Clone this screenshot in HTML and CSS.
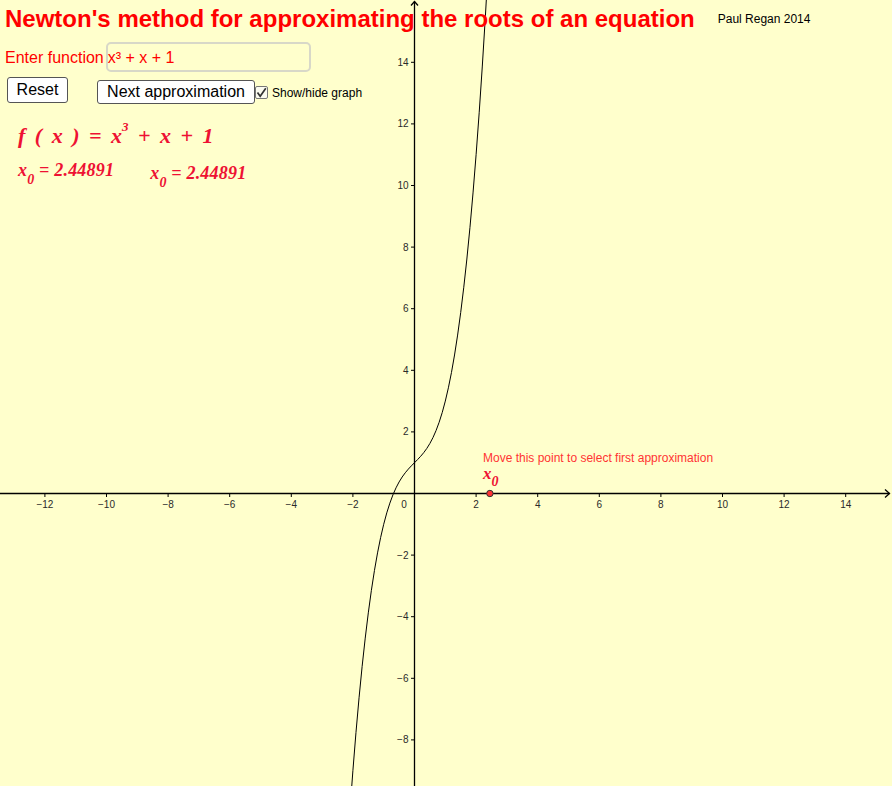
FILE: index.html
```html
<!DOCTYPE html>
<html lang="en">
<head>
<meta charset="utf-8">
<title>Newton's method</title>
<link rel="stylesheet" href="styles.css">
</head>
<body>
<div class="stage">
  <svg class="canvas" width="892" height="786" viewBox="0 0 892 786" xmlns="http://www.w3.org/2000/svg">
    <g class="axes">
      <line x1="0" y1="493.5" x2="889.5" y2="493.5"/>
      <polyline points="885,489.5 889.5,493.5 885,497.5"/>
      <line x1="414.5" y1="1.5" x2="414.5" y2="786"/>
      <polyline points="411,5.5 414.5,1.5 418,5.5"/>
    </g>
    <g class="ticks">
      <line x1="44.9" y1="493.5" x2="44.9" y2="497"/>
      <line x1="106.5" y1="493.5" x2="106.5" y2="497"/>
      <line x1="168.1" y1="493.5" x2="168.1" y2="497"/>
      <line x1="229.7" y1="493.5" x2="229.7" y2="497"/>
      <line x1="291.3" y1="493.5" x2="291.3" y2="497"/>
      <line x1="352.9" y1="493.5" x2="352.9" y2="497"/>
      <line x1="476.1" y1="493.5" x2="476.1" y2="497"/>
      <line x1="537.7" y1="493.5" x2="537.7" y2="497"/>
      <line x1="599.3" y1="493.5" x2="599.3" y2="497"/>
      <line x1="660.9" y1="493.5" x2="660.9" y2="497"/>
      <line x1="722.5" y1="493.5" x2="722.5" y2="497"/>
      <line x1="784.1" y1="493.5" x2="784.1" y2="497"/>
      <line x1="845.7" y1="493.5" x2="845.7" y2="497"/>
      <line x1="411" y1="62.3" x2="414.5" y2="62.3"/>
      <line x1="411" y1="123.9" x2="414.5" y2="123.9"/>
      <line x1="411" y1="185.5" x2="414.5" y2="185.5"/>
      <line x1="411" y1="247.1" x2="414.5" y2="247.1"/>
      <line x1="411" y1="308.7" x2="414.5" y2="308.7"/>
      <line x1="411" y1="370.3" x2="414.5" y2="370.3"/>
      <line x1="411" y1="431.9" x2="414.5" y2="431.9"/>
      <line x1="411" y1="555.1" x2="414.5" y2="555.1"/>
      <line x1="411" y1="616.7" x2="414.5" y2="616.7"/>
      <line x1="411" y1="678.3" x2="414.5" y2="678.3"/>
      <line x1="411" y1="739.9" x2="414.5" y2="739.9"/>
    </g>
    <g class="xlabels">
      <text x="44.9" y="507.5">−12</text>
      <text x="106.5" y="507.5">−10</text>
      <text x="168.1" y="507.5">−8</text>
      <text x="229.7" y="507.5">−6</text>
      <text x="291.3" y="507.5">−4</text>
      <text x="352.9" y="507.5">−2</text>
      <text x="404" y="507.5">0</text>
      <text x="476.1" y="507.5">2</text>
      <text x="537.7" y="507.5">4</text>
      <text x="599.3" y="507.5">6</text>
      <text x="660.9" y="507.5">8</text>
      <text x="722.5" y="507.5">10</text>
      <text x="784.1" y="507.5">12</text>
      <text x="845.7" y="507.5">14</text>
    </g>
    <g class="ylabels">
      <text x="408.5" y="65.8">14</text>
      <text x="408.5" y="127.4">12</text>
      <text x="408.5" y="189">10</text>
      <text x="408.5" y="250.6">8</text>
      <text x="408.5" y="312.2">6</text>
      <text x="408.5" y="373.8">4</text>
      <text x="408.5" y="435.4">2</text>
      <text x="408.5" y="558.6">−2</text>
      <text x="408.5" y="620.2">−4</text>
      <text x="408.5" y="681.8">−6</text>
      <text x="408.5" y="743.4">−8</text>
    </g>
    <g transform="translate(414.5 493.5) scale(30.8 -30.8)">
      <polyline class="curve" points="-2.1,-10.361 -2.0,-9 -1.9,-7.759 -1.8,-6.632 -1.7,-5.613 -1.6,-4.696 -1.5,-3.875 -1.4,-3.144 -1.3,-2.497 -1.2,-1.928 -1.1,-1.431 -1,-1 -0.9,-0.629 -0.8,-0.312 -0.7,-0.043 -0.6,0.184 -0.5,0.375 -0.4,0.536 -0.3,0.673 -0.2,0.792 -0.1,0.899 0,1 0.1,1.101 0.2,1.208 0.3,1.327 0.4,1.464 0.5,1.625 0.6,1.816 0.7,2.043 0.8,2.312 0.9,2.629 1,3 1.1,3.431 1.2,3.928 1.3,4.497 1.4,5.144 1.5,5.875 1.6,6.696 1.7,7.613 1.8,8.632 1.9,9.759 2,11 2.1,12.361 2.2,13.848 2.3,15.467 2.4,17.224"/>
    </g>
    <circle class="point" cx="489.9" cy="493.5" r="3.2"/>
  </svg>

  <div class="panel">
    <header class="head">
      <h1 class="title">Newton's method for approximating the roots of an equation</h1>
      <span class="credit">Paul Regan 2014</span>
    </header>
    <div class="fn-row">
      <span class="fn-label">Enter function</span>
      <div class="fn-input">x³ + x + 1</div>
    </div>
    <div class="btn-row">
      <button class="btn btn-reset">Reset</button>
      <button class="btn btn-next">Next approximation</button>
      <span class="check"><svg width="11" height="11" viewBox="0 0 11 11"><polyline points="1.5,5.5 4.2,9.2 9.8,1.2"/></svg></span>
      <span class="check-label">Show/hide graph</span>
    </div>
    <div class="formula">f ( x ) = x<sup>3</sup> + x + 1</div>
    <div class="approx-row">
      <div class="approx">x<sub>0</sub> = 2.44891</div>
      <div class="approx approx-2">x<sub>0</sub> = 2.44891</div>
    </div>
  </div>

  <div class="hint">Move this point to select first approximation</div>
  <div class="pt-label">x<sub>0</sub></div>
</div>
</body>
</html>
```
FILE: styles.css
```css
* {
  box-sizing: border-box;
}

html,
body {
  margin: 0;
  padding: 0;
}

body {
  background: #ffffcc;
  font-family: "Liberation Sans", Arial, sans-serif;
  overflow: hidden;
}

.stage {
  position: relative;
  width: 892px;
  height: 786px;
}

.canvas {
  position: absolute;
  left: 0;
  top: 0;
}

.axes line,
.axes polyline {
  stroke: #000;
  stroke-width: 1.3;
  fill: none;
}

.ticks line {
  stroke: #000;
  stroke-width: 1;
}

.xlabels text,
.ylabels text {
  font-family: "Liberation Sans", Arial, sans-serif;
  font-size: 10px;
  fill: #2a2a2a;
}

.xlabels text {
  text-anchor: middle;
}

.ylabels text {
  text-anchor: end;
}

.curve {
  fill: none;
  stroke: #000;
  stroke-width: 1;
  stroke-linejoin: round;
  vector-effect: non-scaling-stroke;
}

.point {
  fill: #ff3333;
  stroke: #333;
  stroke-width: 1;
}

.panel {
  position: relative;
  display: flex;
  flex-direction: column;
  align-items: flex-start;
  padding: 5px 0 0 5px;
}

.head {
  display: flex;
  align-items: flex-start;
  gap: 23px;
}

.title {
  margin: 0;
  font-size: 24px;
  line-height: 28px;
  font-weight: bold;
  color: #ff0000;
  white-space: nowrap;
}

.credit {
  margin-top: 7px;
  font-size: 12px;
  line-height: 14px;
  color: #000;
}

.fn-row {
  display: flex;
  align-items: center;
  height: 30px;
  margin-top: 9px;
}

.fn-label {
  font-size: 16px;
  line-height: 18px;
  padding-top: 2px;
  color: #ff0000;
}

.fn-input {
  display: flex;
  align-items: center;
  width: 205px;
  height: 30px;
  margin-left: 2px;
  padding: 2px 0 0 0;
  border: 2px solid #d8d8c8;
  border-radius: 5px;
  font-size: 16px;
  line-height: 18px;
  color: #ff0000;
}

.btn-row {
  display: flex;
  align-items: flex-start;
  margin-top: 5px;
  padding-left: 2px;
}

.btn {
  margin: 0;
  padding: 0;
  font-family: "Liberation Sans", Arial, sans-serif;
  font-size: 16px;
  color: #000;
  background: #fff;
  border: 1px solid #555;
  border-radius: 3px;
}

.btn-reset {
  width: 61px;
  height: 26px;
}

.btn-next {
  width: 158px;
  height: 24px;
  margin-left: 29px;
  margin-top: 3px;
}

.check {
  display: flex;
  align-items: center;
  justify-content: center;
  width: 13px;
  height: 13px;
  margin-top: 9px;
  border: 1px solid #777;
  border-radius: 2px;
  background: #fbfbf0;
}

.check polyline {
  fill: none;
  stroke: #333;
  stroke-width: 1.7;
}

.check-label {
  margin-top: 8.5px;
  margin-left: 4px;
  font-size: 12px;
  line-height: 14px;
  color: #000;
}

.formula {
  margin-top: 19px;
  margin-left: 13px;
  font-family: "Liberation Serif", "Times New Roman", serif;
  font-style: italic;
  font-weight: bold;
  font-size: 22px;
  line-height: 25px;
  word-spacing: 4px;
  white-space: pre;
  color: #ee1133;
}

.formula sup {
  font-size: 13px;
  line-height: 0;
  vertical-align: 12px;
}

.approx-row {
  display: flex;
  align-items: flex-start;
  gap: 36px;
  margin-top: 12px;
  margin-left: 13px;
}

.approx {
  font-family: "Liberation Serif", "Times New Roman", serif;
  font-style: italic;
  font-weight: bold;
  font-size: 18px;
  line-height: 20px;
  letter-spacing: 0.2px;
  color: #ee1133;
  white-space: pre;
}

.approx sub {
  font-size: 14px;
  line-height: 0;
  vertical-align: -8px;
}

.approx-2 {
  margin-top: 3px;
}

.hint {
  position: absolute;
  left: 483px;
  top: 451px;
  font-size: 12px;
  line-height: 14px;
  color: #ff3333;
}

.pt-label {
  position: absolute;
  left: 483px;
  top: 467px;
  font-family: "Liberation Serif", "Times New Roman", serif;
  font-style: italic;
  font-weight: bold;
  font-size: 17px;
  line-height: 14px;
  color: #ee1133;
}

.pt-label sub {
  font-size: 14px;
  line-height: 0;
  vertical-align: -7px;
}
```
